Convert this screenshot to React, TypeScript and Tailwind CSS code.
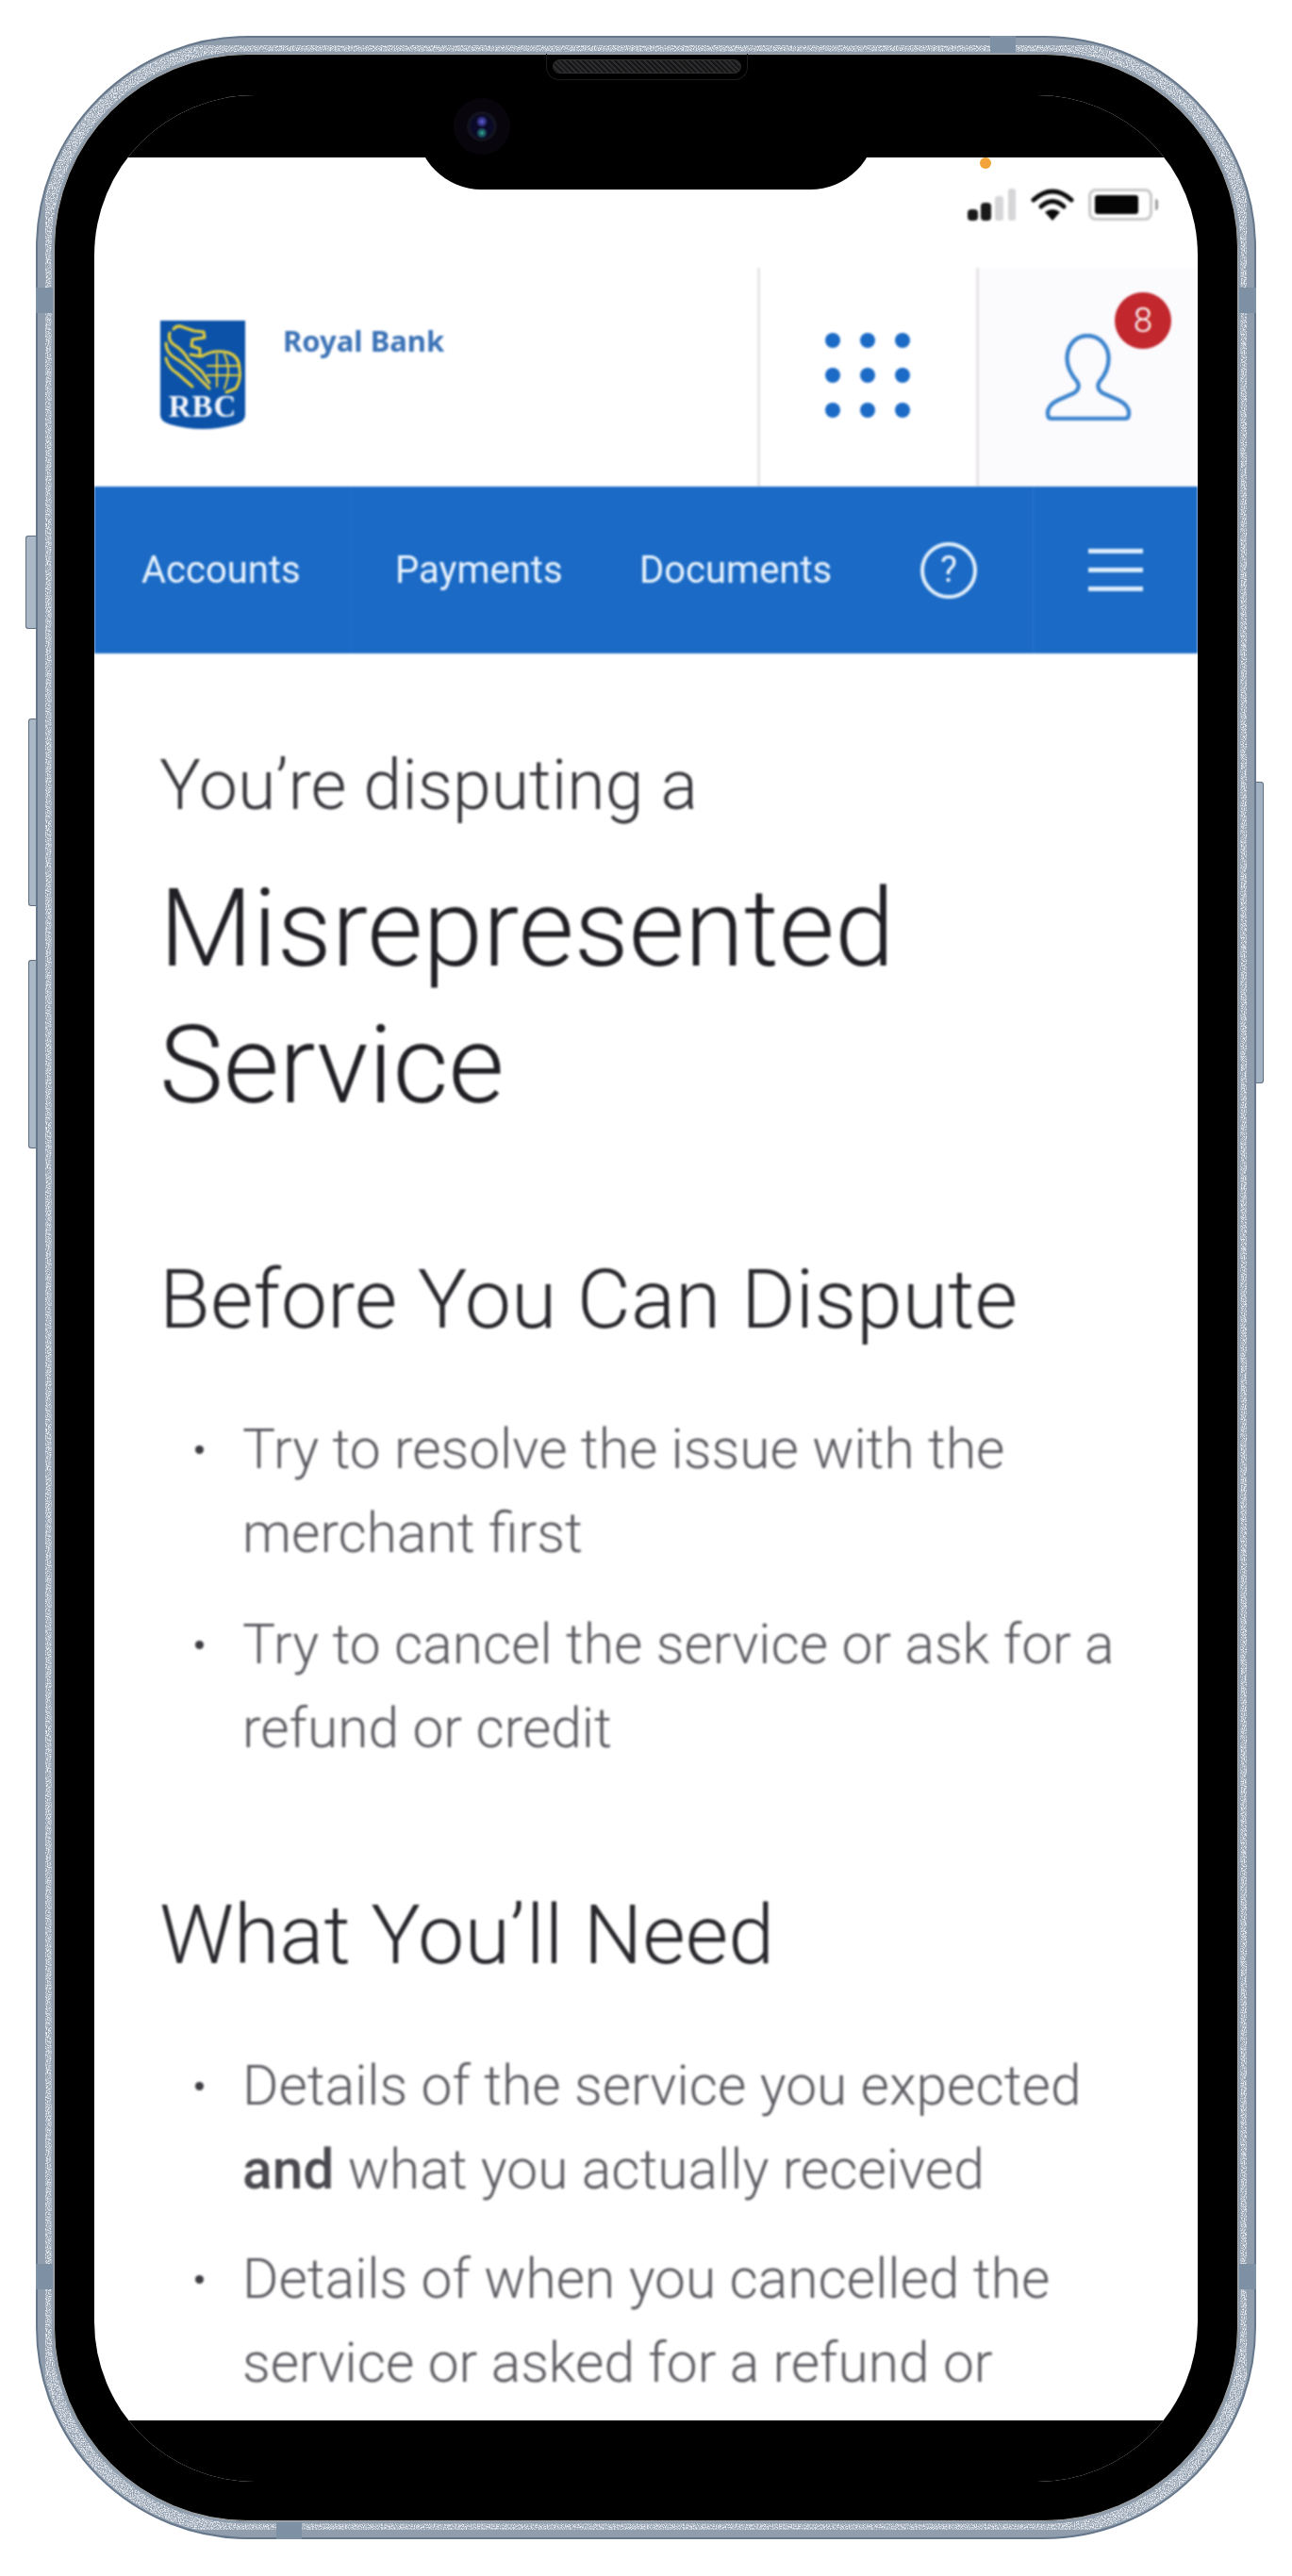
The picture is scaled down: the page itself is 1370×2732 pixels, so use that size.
const bullets1 = [
  ['Try to resolve the issue with the', 'merchant first'],
  ['Try to cancel the service or ask for a', 'refund or credit'],
];

function Bullet({ children }: { children: React.ReactNode }) {
  return (
    <li className="flex">
      <span className="mt-[40px] ml-[38px] mr-[41px] h-[9px] w-[9px] shrink-0 rounded-full bg-[#3c3c41]" />
      <p className="whitespace-nowrap text-[58.7px] leading-[89px] text-[#5c5b61]">{children}</p>
    </li>
  );
}

function RbcLogo() {
  return (
    <svg viewBox="0 0 90 116" className="h-[116px] w-[90px] shrink-0">
      <path d="M0 0H90V100Q90 107 80 110Q45 120 10 110Q0 107 0 100Z" fill="#0b52a8" />
      <g fill="none" stroke="#e7cf3a" strokeWidth="3" strokeLinecap="round" strokeLinejoin="round">
        <path d="M14 9Q18 4 24 7L36 11L46 12L47 18L34 20L33 27L42 30L42 38L32 36" />
        <path d="M10 13Q7 22 18 28Q26 34 30 42L44 54L52 66" />
        <path d="M6 24Q6 34 16 40Q30 48 40 60L52 72" />
        <path d="M6 40Q8 50 18 56L34 70" />
        <path d="M44 38Q56 30 72 34Q84 38 84 52Q86 62 80 72L70 76" />
        <path d="M60 36V70M50 48H82M50 58H82M68 36Q76 52 68 72" strokeWidth="2" />
      </g>
      <text x="45" y="102" textAnchor="middle" fontFamily="'Liberation Serif',serif" fontWeight="700" fontSize="33" letterSpacing="1" fill="#f2f5fa">
        RBC
      </text>
    </svg>
  );
}

function StatusIcons() {
  return (
    <div className="flex items-center gap-[15px]">
      <svg viewBox="0 0 52 34" className="h-[34px] w-[52px]">
        <rect x="0" y="22" width="11" height="12" rx="4" fill="#1a1a1a" />
        <rect x="14" y="15" width="11" height="19" rx="4" fill="#1a1a1a" />
        <rect x="29" y="8" width="9" height="26" rx="3" fill="#d6d6d8" />
        <rect x="43" y="0" width="8" height="34" rx="3" fill="#d6d6d8" />
      </svg>
      <svg viewBox="0 0 46 34" className="h-[34px] w-[46px]">
        <path d="M3 12Q23 -6 43 12" fill="none" stroke="#0a0a0a" strokeWidth="5" strokeLinecap="round" />
        <path d="M11 19Q23 8 35 19" fill="none" stroke="#0a0a0a" strokeWidth="5" strokeLinecap="round" />
        <path d="M23 34L15 25Q23 19 31 25Z" fill="#0a0a0a" />
      </svg>
      <div className="flex items-center gap-[3px]">
        <div className="h-[34px] w-[68px] rounded-[8px] border-[3px] border-[#c9c9cb] p-[4px]">
          <div className="h-full w-[46px] rounded-[3px] bg-[#050505]" />
        </div>
        <div className="h-[12px] w-[3px] rounded-r-full bg-[#9a9a9c]" />
      </div>
    </div>
  );
}

function UserIcon() {
  return (
    <svg viewBox="0 0 94 94" className="h-[92px] w-[94px]">
      <path
        d="M46 2C33 2 24 13 24 27C24 38 30 46 35 52C38 57 36 62 30 65L14 72C6 76 3 80 3 86C3 90 5 92 8 92H86C89 92 91 90 91 86C91 80 88 76 80 72L64 65C58 62 56 57 59 52C64 46 69 38 69 27C69 13 59 2 46 2Z"
        fill="none"
        stroke="#3f86ce"
        strokeWidth="4.5"
      />
    </svg>
  );
}

const dots = [0, 1, 2, 3, 4, 5, 6, 7, 8];

function Screen() {
  return (
    <div className="flex h-[2531px] w-[1170px] flex-col overflow-hidden rounded-[170px] bg-white [font-family:Roboto,sans-serif]">
      <div className="h-[66px] shrink-0 bg-black" />

      {/* status bar */}
      <div className="flex h-[117px] shrink-0 items-end justify-end pb-[50px] pr-[42px] blur-[1px]">
        <StatusIcons />
      </div>

      {/* header */}
      <div className="flex h-[232px] shrink-0 blur-[0.8px]">
        <div className="flex flex-1 items-start gap-[40px] pl-[70px] pt-[56px]">
          <RbcLogo />
          <span className="mt-[3px] text-[31px] font-bold leading-[36px] text-[#3b72b6] [font-family:'Noto_Sans',sans-serif]">Royal Bank</span>
        </div>
        <div className="flex w-[235px] items-center justify-center border-x-[3px] border-[#e8e5e8] pb-[4px] pr-[2px]">
          <div className="grid grid-cols-3 gap-x-[21px] gap-y-[21px]">
            {dots.map((d) => (
              <span key={d} className="h-[16px] w-[16px] rounded-full bg-[#1a6ac6]" />
            ))}
          </div>
        </div>
        <div className="relative flex w-[232px] items-start justify-center bg-[#fbfafd] pt-[70px]">
          <UserIcon />
          <span className="absolute right-[28px] top-[26px] flex h-[60px] w-[60px] items-center justify-center rounded-full bg-[#c1272d] text-[36px] font-light text-white">
            8
          </span>
        </div>
      </div>

      {/* nav */}
      <nav className="flex h-[177px] shrink-0 items-center bg-[#1a6ac6] text-[40px] text-[#eaf4fd] blur-[0.8px]">
        <div className="flex h-full w-[272px] items-center border-r border-[#2470c8] pl-[50px]">Accounts</div>
        <div className="ml-[47px] w-[259px]">Payments</div>
        <div className="w-[298px]">Documents</div>
        <div className="flex w-[119px] items-center">
          <span className="flex h-[60px] w-[60px] items-center justify-center rounded-full border-[4px] border-[#e3f0fb] text-[38px]">
            ?
          </span>
        </div>
        <div className="flex h-full flex-1 flex-col items-center justify-center gap-[15px] border-l border-[#2f78cc]">
          <span className="h-[5px] w-[58px] bg-[#d9ebfa]" />
          <span className="h-[5px] w-[58px] bg-[#d9ebfa]" />
          <span className="h-[5px] w-[58px] bg-[#d9ebfa]" />
        </div>
      </nav>

      {/* content */}
      <main className="min-h-0 flex-1 overflow-hidden pl-[69px] pt-[100px] font-light blur-[1px]">
        <p className="text-[73.5px] leading-[80px] text-[#37373c]">You’re disputing a</p>
        <h1 className="mt-[40px] text-[114.5px] leading-[145px] text-[#1f1f24]">
          Misrepresented
          <br />
          Service
        </h1>
        <h2 className="mt-[125px] text-[88px] leading-[100px] text-[#28282d]">Before You Can Dispute</h2>
        <ul className="mt-[65px] flex flex-col gap-[29px]">
          {bullets1.map(([a, b]) => (
            <Bullet key={a}>
              {a}
              <br />
              {b}
            </Bullet>
          ))}
        </ul>
        <h2 className="mt-[124px] text-[88px] leading-[100px] text-[#28282d]">What You’ll Need</h2>
        <ul className="mt-[66px] flex flex-col gap-[27px]">
          <Bullet>
            Details of the service you expected
            <br />
            <b className="font-medium text-[#4a494f]">and</b> what you actually received
          </Bullet>
          <Bullet>
            Details of when you cancelled the
            <br />
            service or asked for a refund or
          </Bullet>
        </ul>
      </main>

      <div className="h-[65px] shrink-0 bg-black" />
    </div>
  );
}

function Phone() {
  return (
    <div className="relative h-[2655px] w-[1294px] rounded-[225px] border-[2px] border-[#66778b] bg-[#8f9dac] p-[17px]">
      {/* side buttons */}
      <span className="absolute left-[-13px] top-[528px] h-[99px] w-[11px] rounded-l-[3px] border border-r-0 border-[#5f6f82] bg-[#a9b7c6]" />
      <span className="absolute left-[-10px] top-[722px] h-[199px] w-[8px] rounded-l-[3px] border border-r-0 border-[#5f6f82] bg-[#a9b7c6]" />
      <span className="absolute left-[-10px] top-[978px] h-[200px] w-[8px] rounded-l-[3px] border border-r-0 border-[#5f6f82] bg-[#a9b7c6]" />
      <span className="absolute right-[-10px] top-[789px] h-[320px] w-[8px] rounded-r-[3px] border border-l-0 border-[#5f6f82] bg-[#a4b3c3]" />

      {/* metal grain */}
      <svg className="pointer-events-none absolute inset-[-2px] h-[2655px] w-[1294px]" viewBox="0 0 1294 2655">
        <filter id="grain" x="0" y="0" width="100%" height="100%">
          <feTurbulence type="fractalNoise" baseFrequency="0.8" numOctaves="2" seed="4" />
          <feColorMatrix values="0 0 0 0 0.86  0 0 0 0 0.88  0 0 0 0 0.92  0 0 0 3 -1.1" />
          <feComposite in2="SourceAlpha" operator="in" />
        </filter>
        <rect x="10" y="10" width="1274" height="2635" rx="214" fill="none" stroke="#000" strokeWidth="13" filter="url(#grain)" />
      </svg>

      {/* antenna bands */}
      <span className="absolute left-[1010px] top-[-2px] h-[18px] w-[27px] bg-[#7e90a3]" />
      <span className="absolute left-[253px] bottom-[-2px] h-[18px] w-[27px] bg-[#7e90a3]" />
      <span className="absolute left-[-2px] top-[265px] h-[27px] w-[18px] bg-[#7e90a3]" />
      <span className="absolute right-[-2px] top-[265px] h-[27px] w-[18px] bg-[#7e90a3]" />
      <span className="absolute left-[-2px] bottom-[263px] h-[27px] w-[18px] bg-[#7e90a3]" />
      <span className="absolute right-[-2px] bottom-[263px] h-[27px] w-[18px] bg-[#7e90a3]" />

      <div className="relative h-full w-full rounded-[206px] border-[1px] border-[#a8a8a8] bg-black py-[43px] pl-[42px]">
        <Screen />

        {/* notch */}
        <div className="absolute left-[383px] top-[43px] h-[100px] w-[488px] rounded-b-[70px] bg-black" />
        {/* speaker */}
        <div className="absolute left-[521px] top-[-1px] flex h-[28px] w-[214px] items-center justify-center rounded-b-[14px] border-x border-b border-[#1c1c1e]">
          <div className="h-[15px] w-[200px] rounded-full border border-[#2f2f31] bg-[repeating-linear-gradient(45deg,#2b2b2d_0px,#2b2b2d_2px,#161617_2px,#161617_4px)]" />
        </div>
        {/* camera */}
        <svg className="absolute left-[423px] top-[46px] h-[60px] w-[60px]" viewBox="0 0 60 60">
          <defs>
            <radialGradient id="lensTop">
              <stop offset="0%" stopColor="#5c5cd8" />
              <stop offset="100%" stopColor="#14123c" />
            </radialGradient>
            <radialGradient id="lensBottom">
              <stop offset="0%" stopColor="#2fa58f" />
              <stop offset="100%" stopColor="#0d1030" />
            </radialGradient>
          </defs>
          <circle cx="30" cy="30" r="30" fill="#08060c" />
          <circle cx="30" cy="30" r="16" fill="#12121f" />
          <circle cx="30" cy="30" r="12" fill="#0a0a28" />
          <circle cx="30" cy="25" r="6" fill="url(#lensTop)" />
          <circle cx="30" cy="37" r="6" fill="url(#lensBottom)" />
        </svg>
      </div>

      {/* privacy dot */}
      <span className="absolute left-[999px] top-[127px] h-[12px] w-[12px] rounded-full bg-[#f2a33a] blur-[0.5px]" />
    </div>
  );
}

export default function App() {
  return (
    <div className="flex h-[2732px] w-[1370px] items-start bg-white pl-[38px] pt-[38px]">
      <Phone />
    </div>
  );
}
